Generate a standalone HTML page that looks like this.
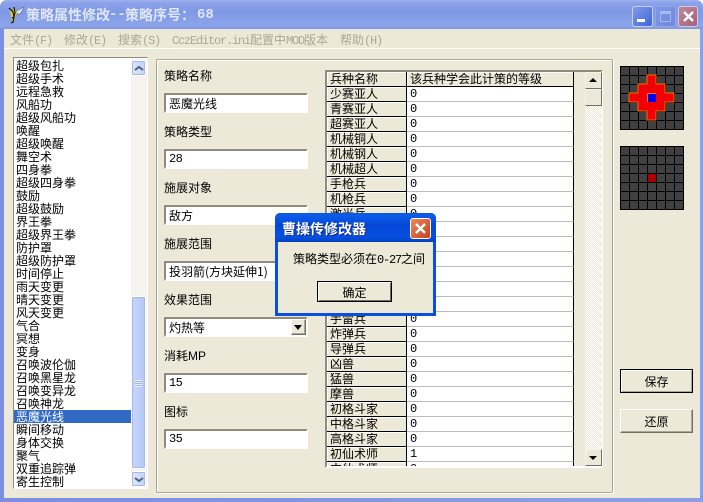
<!DOCTYPE html>
<html><head><meta charset="utf-8">
<style>
html,body{margin:0;padding:0;width:703px;height:502px;overflow:hidden;background:#fff}
*{box-sizing:border-box}
body{font:12px/13px "WenQuanYi Zen Hei","Noto Sans CJK SC",sans-serif;color:#000;position:relative}
.a{position:absolute}
.m{font-family:"Liberation Mono",monospace;font-size:12px;letter-spacing:-1.2px}
#win{left:0;top:0;width:703px;height:502px;background:linear-gradient(90deg,#7b8ee2,#8c9fe6);border-radius:7px 7px 0 0}
#title{left:0;top:0;width:703px;height:29px;border-radius:7px 7px 0 0;background:linear-gradient(180deg,#9fb2ee 0,#8ba2ea 3px,#8099e6 12px,#8ca4ea 26px,#7f97e4 29px)}
#body{left:4px;top:29px;width:696px;height:469px;background:#ece9d8}
.ttl{top:7px;color:#dfe8fa;font:bold 14px/16px "WenQuanYi Zen Hei","Noto Sans CJK SC",sans-serif;white-space:nowrap}
.ttm{font:bold 14px/16px "Liberation Mono",monospace}
.menu{top:33px;color:#aca899;white-space:nowrap}
.sunk{background:#fff;border:2px solid;border-color:#8f8c7f #fff #fff #8f8c7f}
.lbl{left:164px;white-space:nowrap}
.ed{left:164px;width:144px;height:20px;padding:2px 0 0 3px;white-space:nowrap;overflow:hidden}
.btn{background:#ece9d8;border:1px solid;border-color:#fff #716f64 #716f64 #fff;box-shadow:inset -1px -1px 0 #aca899;text-align:center}
#list{left:13px;top:57px;width:135px;height:432px;background:#fff;border:1px solid;border-color:#8f8c7f #fff #fff #8f8c7f;overflow:hidden}
#list div{position:absolute;left:0;width:117px;height:13px;padding-left:2px;white-space:nowrap}
.sel{background:#316ac5;color:#fff}
.lb{background:linear-gradient(90deg,#dfe7fb,#c3d2f7);border:1px solid #fff;border-radius:2px;box-shadow:0 0 0 1px #a9b9e4 inset}
#grid{left:325px;top:70px;width:278px;height:398px;background:#ece9d8;border:2px solid;border-color:#8f8c7f #fff #fff #8f8c7f;overflow:hidden}
.c1{position:absolute;left:0;width:80px;height:15px;background:#ece9d8;border-bottom:1px solid #000;border-right:1px solid #000;padding:0 0 0 3px;white-space:nowrap;box-shadow:inset 1px 1px 0 #fff}
.c2{position:absolute;left:80px;width:167px;height:15px;background:#fff;border-bottom:1px solid #bbb;border-right:1px solid #000;padding:1px 0 0 3px;white-space:nowrap}
.h2{background:#ece9d8;border-bottom:1px solid #000;box-shadow:inset 1px 1px 0 #fff;padding-top:0}
.sb{background:#ece9d8;border:1px solid;border-color:#f5f4ec #716f64 #716f64 #f5f4ec;width:17px}
.tri{position:absolute;left:4px;width:0;height:0;border-left:4px solid transparent;border-right:4px solid transparent}
</style></head><body>
<div id="win" class="a"></div>
<div id="title" class="a"></div>
<div id="body" class="a"></div>
<div class="a" style="left:4px;top:48px;width:696px;height:1px;background:#fff"></div>

<svg class="a" style="left:7px;top:6px" width="20" height="18" viewBox="0 0 20 18">
<path d="M9 5l8-4-3 6-3 2z" fill="#d8e0f0" stroke="#5a6a90" stroke-width=".6"/>
<path d="M2 2l4 3 1-4 3 6-2 4-1 4-3 3 1-5-1-4z" fill="#ecd830"/>
<path d="M2 2l4 4 1 5-2 1M7 1l1 6-1 4-1 5-2 1" fill="none" stroke="#1c1c10" stroke-width="1.3"/>
</svg>
<div class="a ttl" style="left:26px">策略属性修改</div>
<div class="a ttl ttm" style="left:109px">--</div>
<div class="a ttl" style="left:125px">策略序号：</div>
<div class="a ttl ttm" style="left:197px">68</div>

<div class="a" style="left:632px;top:6px;width:21px;height:21px;border-radius:3px;border:1px solid #c6d2f2;background:linear-gradient(135deg,#7f9bec,#3e66d8)"><div class="a" style="left:4px;top:12px;width:8px;height:3px;background:#fff"></div></div>
<div class="a" style="left:655px;top:6px;width:21px;height:21px;border-radius:3px;border:1px solid #90a4e6;background:linear-gradient(135deg,#7f98e6,#6d88e0)"><div class="a" style="left:4px;top:4px;width:11px;height:11px;border:1px solid #a8b8ec;border-top-width:3px"></div></div>
<div class="a" style="left:678px;top:6px;width:20px;height:21px;border-radius:3px;border:1px solid #d8c8d8;background:linear-gradient(135deg,#b88a9e,#a5607a)">
<svg class="a" style="left:3px;top:3px" width="13" height="13" viewBox="0 0 13 13"><path d="M2 2l9 9M11 2l-9 9" stroke="#fff" stroke-width="2.4"/></svg></div>

<div class="a menu" style="left:10px">文件<span class="m">(F)</span></div>
<div class="a menu" style="left:64px">修改<span class="m">(E)</span></div>
<div class="a menu" style="left:118px">搜索<span class="m">(S)</span></div>
<div class="a menu" style="left:172px"><span class="m">CczEditor.ini</span>配置中<span class="m">MOD</span>版本</div>
<div class="a menu" style="left:340px">帮助<span class="m">(H)</span></div>

<div id="list" class="a">
<div style="top:1px">超级包扎</div><div style="top:14px">超级手术</div><div style="top:27px">远程急救</div><div style="top:40px">风船功</div><div style="top:53px">超级风船功</div><div style="top:66px">唤醒</div><div style="top:79px">超级唤醒</div><div style="top:92px">舞空术</div><div style="top:105px">四身拳</div><div style="top:118px">超级四身拳</div><div style="top:131px">鼓励</div><div style="top:144px">超级鼓励</div><div style="top:157px">界王拳</div><div style="top:170px">超级界王拳</div><div style="top:183px">防护罩</div><div style="top:196px">超级防护罩</div><div style="top:209px">时间停止</div><div style="top:222px">雨天变更</div><div style="top:235px">晴天变更</div><div style="top:248px">风天变更</div><div style="top:261px">气合</div><div style="top:274px">冥想</div><div style="top:287px">变身</div><div style="top:300px">召唤波伦伽</div><div style="top:313px">召唤黑星龙</div><div style="top:326px">召唤变异龙</div><div style="top:339px">召唤神龙</div><div class="sel" style="top:352px">恶魔光线</div><div style="top:365px">瞬间移动</div><div style="top:378px">身体交换</div><div style="top:391px">聚气</div><div style="top:404px">双重追踪弹</div><div style="top:417px">寄生控制</div>
</div>
<div class="a" style="left:131px;top:59px;width:16px;height:428px;background:#f4f3ee"></div>
<div class="a lb" style="left:131px;top:60px;width:15px;height:16px"><svg class="a" style="left:2px;top:4px" width="10" height="7"><path d="M1 5l4-3 4 3" fill="none" stroke="#4d6185" stroke-width="2"/></svg></div>
<div class="a lb" style="left:131px;top:296px;width:15px;height:173px;background:linear-gradient(90deg,#c8d6fb,#b4c8f8)"></div>
<div class="a" style="left:135px;top:380px;width:7px;height:7px;background:repeating-linear-gradient(180deg,#eef3fe 0 1px,#9fb5ea 1px 2px)"></div>
<div class="a lb" style="left:131px;top:471px;width:15px;height:16px"><svg class="a" style="left:2px;top:4px" width="10" height="7"><path d="M1 2l4 3 4-3" fill="none" stroke="#4d6185" stroke-width="2"/></svg></div>

<div class="a" style="left:156px;top:59px;width:457px;height:434px;border:1px solid;border-color:#aca899;box-shadow:inset 1px 1px 0 #fff,1px 1px 0 #fff;border-radius:2px"></div>

<div class="a lbl" style="top:69px">策略名称</div>
<div class="a ed sunk" style="top:93px">恶魔光线</div>
<div class="a lbl" style="top:125px">策略类型</div>
<div class="a ed sunk m" style="top:149px;letter-spacing:-.6px">28</div>
<div class="a lbl" style="top:181px">施展对象</div>
<div class="a ed sunk" style="top:205px">敌方</div>
<div class="a lbl" style="top:237px">施展范围</div>
<div class="a ed sunk" style="top:261px">投羽箭(方块延伸1)</div>
<div class="a lbl" style="top:293px">效果范围</div>
<div class="a ed sunk" style="top:317px">灼热等</div>
<div class="a btn" style="left:291px;top:319px;width:15px;height:16px"><div class="tri" style="top:5px;left:2px;border-top:5px solid #000"></div></div>
<div class="a lbl" style="top:349px">消耗<span style="font:12px 'Liberation Sans',sans-serif">MP</span></div>
<div class="a ed sunk m" style="top:373px;letter-spacing:-.6px">15</div>
<div class="a lbl" style="top:405px">图标</div>
<div class="a ed sunk m" style="top:429px;letter-spacing:-.6px">35</div>

<div id="grid" class="a">
<div class="c1" style="top:0">兵种名称</div><div class="c2 h2" style="top:0">该兵种学会此计策的等级</div>
<div class="c1" style="top:15px">少赛亚人</div><div class="c2 m" style="top:15px">0</div>
<div class="c1" style="top:30px">青赛亚人</div><div class="c2 m" style="top:30px">0</div>
<div class="c1" style="top:45px">超赛亚人</div><div class="c2 m" style="top:45px">0</div>
<div class="c1" style="top:60px">机械铜人</div><div class="c2 m" style="top:60px">0</div>
<div class="c1" style="top:75px">机械钢人</div><div class="c2 m" style="top:75px">0</div>
<div class="c1" style="top:90px">机械超人</div><div class="c2 m" style="top:90px">0</div>
<div class="c1" style="top:105px">手枪兵</div><div class="c2 m" style="top:105px">0</div>
<div class="c1" style="top:120px">机枪兵</div><div class="c2 m" style="top:120px">0</div>
<div class="c1" style="top:135px">激光兵</div><div class="c2 m" style="top:135px">0</div>
<div class="c1" style="top:150px"></div><div class="c2 m" style="top:150px">0</div>
<div class="c1" style="top:165px"></div><div class="c2 m" style="top:165px">0</div>
<div class="c1" style="top:180px"></div><div class="c2 m" style="top:180px">0</div>
<div class="c1" style="top:195px"></div><div class="c2 m" style="top:195px">0</div>
<div class="c1" style="top:210px"></div><div class="c2 m" style="top:210px">0</div>
<div class="c1" style="top:225px"></div><div class="c2 m" style="top:225px">0</div>
<div class="c1" style="top:240px">手雷兵</div><div class="c2 m" style="top:240px">0</div>
<div class="c1" style="top:255px">炸弹兵</div><div class="c2 m" style="top:255px">0</div>
<div class="c1" style="top:270px">导弹兵</div><div class="c2 m" style="top:270px">0</div>
<div class="c1" style="top:285px">凶兽</div><div class="c2 m" style="top:285px">0</div>
<div class="c1" style="top:300px">猛兽</div><div class="c2 m" style="top:300px">0</div>
<div class="c1" style="top:315px">摩兽</div><div class="c2 m" style="top:315px">0</div>
<div class="c1" style="top:330px">初格斗家</div><div class="c2 m" style="top:330px">0</div>
<div class="c1" style="top:345px">中格斗家</div><div class="c2 m" style="top:345px">0</div>
<div class="c1" style="top:360px">高格斗家</div><div class="c2 m" style="top:360px">0</div>
<div class="c1" style="top:375px">初仙术师</div><div class="c2 m" style="top:375px">1</div>
<div class="c1" style="top:390px">中仙术师</div><div class="c2 m" style="top:390px">0</div>
</div>
<div class="a" style="left:585px;top:72px;width:17px;height:394px;background-image:conic-gradient(#fff 25%,#ece9d8 0 50%,#fff 0 75%,#ece9d8 0);background-size:2px 2px"></div>
<div class="a sb" style="left:585px;top:72px;height:17px"><div class="tri" style="top:5px;left:3px;border-bottom:4px solid #000"></div></div>
<div class="a sb" style="left:585px;top:89px;height:17px"></div>
<div class="a sb" style="left:585px;top:449px;height:17px"><div class="tri" style="top:6px;left:3px;border-top:4px solid #000"></div></div>

<svg class="a" style="left:620px;top:66px" width="64" height="64" viewBox="0 0 64 64" shape-rendering="crispEdges">
<defs><pattern id="p" width="9" height="9" patternUnits="userSpaceOnUse"><rect width="9" height="9" fill="#000"/><rect x="1" y="1" width="8" height="8" fill="#404040"/></pattern></defs>
<rect width="64" height="64" fill="#000"/><rect width="63" height="63" fill="url(#p)"/>
<path d="M27 9h9v9h9v9h9v9h-9v9h-9v9h-9v-9h-9v-9h-9v-9h9v-9h9z" fill="#f00000" stroke="#f07000" stroke-width="1"/>
<rect x="27" y="27" width="9" height="9" fill="#f07000"/><rect x="28" y="28" width="8" height="8" fill="#0000f0"/>
</svg>
<svg class="a" style="left:620px;top:146px" width="64" height="64" viewBox="0 0 64 64" shape-rendering="crispEdges">
<rect width="64" height="64" fill="#000"/><rect width="63" height="63" fill="url(#p)"/>
<rect x="28" y="28" width="8" height="8" fill="#a80000"/>
</svg>

<div class="a" style="left:620px;top:369px;width:73px;height:24px;border:1px solid #000;background:#ece9d8;box-shadow:inset 1px 1px 0 #fff,inset -1px -1px 0 #aca899;text-align:center;padding-top:5px">保存</div>
<div class="a" style="left:620px;top:409px;width:73px;height:24px;border:1px solid;border-color:#fff #716f64 #716f64 #fff;background:#ece9d8;box-shadow:inset -1px -1px 0 #aca899;text-align:center;padding-top:5px">还原</div>

<div class="a" style="left:275px;top:213px;width:161px;height:103px;background:#0a50e0;border-radius:5px 5px 0 0"></div>
<div class="a" style="left:275px;top:213px;width:161px;height:29px;border-radius:5px 5px 0 0;background:linear-gradient(180deg,#0a5ae6 0,#0a5ce8 3px,#0548d8 12px,#0650e0 24px,#0340c0 29px)"></div>
<div class="a" style="left:278px;top:242px;width:155px;height:71px;background:#ece9d8"></div>
<div class="a" style="left:282px;top:221px;color:#fff;font:bold 14px/16px 'WenQuanYi Zen Hei','Noto Sans CJK SC',sans-serif;white-space:nowrap;text-shadow:1px 1px 0 #0a2a90">曹操传修改器</div>
<div class="a" style="left:410px;top:218px;width:21px;height:21px;border:1px solid #fff;border-radius:3px;background:linear-gradient(135deg,#e88a60,#c8401c)">
<svg class="a" style="left:3px;top:3px" width="13" height="13" viewBox="0 0 13 13"><path d="M2 2l9 9M11 2l-9 9" stroke="#fff" stroke-width="2.4"/></svg></div>
<div class="a" style="left:293px;top:252px;white-space:nowrap">策略类型必须在<span class="m">0-27</span>之间</div>
<div class="a" style="left:317px;top:281px;width:75px;height:21px;border:1px solid #000;background:#ece9d8;box-shadow:inset 1px 1px 0 #fff,inset -1px -1px 0 #716f64;text-align:center;padding-top:4px">确定</div>
</body></html>
